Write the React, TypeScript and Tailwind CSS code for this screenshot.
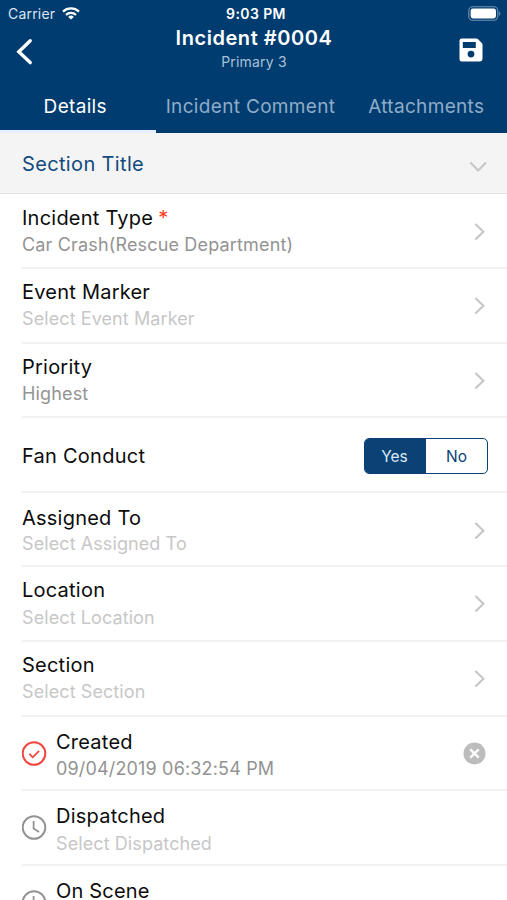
import clsx from 'clsx';

type Field = {
  label: string;
  value: string;
  filled?: boolean;
  required?: boolean;
  low?: boolean;
};

const fields: Field[] = [
  { label: 'Incident Type', value: 'Car Crash(Rescue Department)', filled: true, required: true },
  { label: 'Event Marker', value: 'Select Event Marker' },
  { label: 'Priority', value: 'Highest', filled: true },
];

const placeFields: Field[] = [
  { label: 'Assigned To', value: 'Select Assigned To', low: true },
  { label: 'Location', value: 'Select Location' },
  { label: 'Section', value: 'Select Section' },
];

const times = [
  { label: 'Created', value: '09/04/2019 06:32:54 PM', done: true },
  { label: 'Dispatched', value: 'Select Dispatched', done: false },
];

function Chevron({ className }: { className?: string }) {
  return (
    <svg className={clsx('w-[18px] h-[18px] shrink-0', className)} viewBox="0 0 18 18" fill="none" stroke="#c6c6c6" strokeWidth="2.1">
      <path d="M4.4 1L12.4 8.8l-8 7.8" />
    </svg>
  );
}

function FieldText({ label, value, filled, required, low }: Field) {
  return (
    <div className="flex-1 whitespace-nowrap">
      <p className="text-[20px] leading-6 tracking-[0.23px] text-[#0c0c0c]">
        {label}
        {required && <span className="ml-[5px] text-[#ff3b22]">*</span>}
      </p>
      <p
        className={clsx(
          'text-[18px] leading-6',
          low ? 'mt-[2px]' : 'mt-[3.3px]',
          filled ? 'tracking-[0.16px] text-[#939393]' : 'tracking-[0.09px] text-[#c7c7c7]',
        )}
      >
        {value}
      </p>
    </div>
  );
}

function FieldRow(props: Field) {
  return (
    <div className={clsx('flex h-[74.6px] border-b-2 border-[#f1f1f1] pr-[18px]', props.low ? 'pt-[13px]' : 'pt-[11px]')}>
      <FieldText {...props} />
      <Chevron className={props.low ? 'mt-[16px]' : 'mt-[17px]'} />
    </div>
  );
}

function StatusIcon({ done }: { done: boolean }) {
  return (
    <svg
      className="mt-[11px] mr-[8px] w-[26px] h-[26px] shrink-0"
      viewBox="0 0 26 26"
      fill="none"
      stroke={done ? '#f4453f' : '#949494'}
      strokeWidth="2"
    >
      <circle cx="12" cy="12.5" r="11.3" />
      {done ? <path d="M7.4 12.8l3.3 3.5 6.4-6.5" strokeWidth="1.8" /> : <path d="M11.6 6v7.6l5.4 3.4" strokeWidth="1.8" />}
    </svg>
  );
}

export default function App() {
  return (
    <div className="h-[900px] w-[507px] overflow-hidden bg-white font-['Inter',sans-serif]">
      <header className="h-[132.5px] bg-[#003c70] text-white">
        {/* Status bar */}
        <div className="grid h-[26px] grid-cols-[1fr_auto_1fr] items-center pl-[8px] pr-[6px]">
          <div className="flex items-center gap-[7px] text-[14px] tracking-[0.2px] text-[#dbe6f0]">
            Carrier
            <svg className="h-[13px] w-[18px]" viewBox="0 0 18 13" fill="none" stroke="#fff" strokeWidth="2.2">
              <path d="M1 4.6a11.8 11.8 0 0 1 16 0" />
              <path d="M4 7.9a7.4 7.4 0 0 1 10 0" />
              <path d="M9 12.6L6.2 9.9a4 4 0 0 1 5.6 0z" fill="#fff" stroke="none" />
            </svg>
          </div>
          <div className="mr-[-3px] text-[14px] font-semibold tracking-[0.4px]">9:03 PM</div>
          <svg className="h-[15px] w-[33px] justify-self-end" viewBox="0 0 33 15">
            <rect x="0.8" y="0.8" width="29" height="13.4" rx="4" fill="none" stroke="#6f92b2" strokeWidth="1.1" />
            <rect x="2.6" y="2.6" width="25.4" height="9.8" rx="2.4" fill="#fff" />
            <path d="M31.2 5.2v4.6c1.6-.8 1.6-3.8 0-4.6z" fill="#6f92b2" />
          </svg>
        </div>

        {/* Title bar */}
        <div className="grid h-[53px] grid-cols-[60px_1fr_60px]">
          <svg
            className="ml-[15px] mt-[12px] h-[28px] w-[20px]"
            viewBox="0 0 20 28"
            fill="none"
            stroke="#fff"
            strokeWidth="3.4"
            strokeLinecap="round"
          >
            <path d="M15.2 2.8L3.8 13.8l11.4 10.8" />
          </svg>
          <div className="pl-px text-center">
            <h1 className="text-[20px] leading-6 font-semibold tracking-[0.55px]">Incident #0004</h1>
            <p className="mt-[2px] text-[14px] leading-5 tracking-[0.2px] text-[#a9c2d9]">Primary 3</p>
          </div>
          <svg className="ml-[12px] mt-[12px] h-[24px] w-[24px]" viewBox="0 0 24 24" fill="#fff">
            <path
              fillRule="evenodd"
              d="M2.8.5h14.6a2 2 0 0 1 1.4.6l4 3.9a2 2 0 0 1 .7 1.5v14.6a2.4 2.4 0 0 1-2.4 2.4H2.8a2.3 2.3 0 0 1-2.3-2.3V2.8A2.3 2.3 0 0 1 2.8.5zM3.8 4v6h13V4zM12 12.7a3.4 3.4 0 1 0 0 6.8 3.4 3.4 0 0 0 0-6.8z"
            />
          </svg>
        </div>

        <nav className="grid h-[53.5px] grid-cols-[155.5px_190px_1fr] text-center text-[19px] leading-[45px] tracking-[0.33px] whitespace-nowrap text-[#8facc8]">
          <div className="border-b-[3px] border-[#e8f0ff] pt-[5px] pr-[5px] text-white">Details</div>
          <div className="pt-[5px]">Incident Comment</div>
          <div className="pt-[5px]">Attachments</div>
        </nav>
      </header>

      <div className="flex h-[61px] items-center justify-between border-b border-[#e2e2e2] bg-[#f4f4f4] pr-[20px] pl-[22px]">
        <h2 className="pt-[2px] text-[20px] tracking-[0.35px] text-[#124a7e]">Section Title</h2>
        <Chevron className="mt-[8px] rotate-90" />
      </div>

      <main className="pt-px pl-[22px]">
        {fields.map((f) => (
          <FieldRow key={f.label} {...f} />
        ))}

        <div className="flex h-[74.6px] items-center justify-between border-b-2 border-[#f1f1f1] pt-[2px] pr-[19px]">
          <p className="text-[20px] tracking-[0.25px] text-[#0c0c0c]">Fan Conduct</p>
          <div className="grid h-[36px] w-[124px] grid-cols-2 overflow-hidden rounded-[5px] border-[1.5px] border-[#0a4276] text-center text-[15.5px] leading-[35px]">
            <div className="bg-[#0a4276] pr-[2px] text-[#dce9f5]">Yes</div>
            <div className="text-[#0a4276]">No</div>
          </div>
        </div>

        {placeFields.map((f) => (
          <FieldRow key={f.label} {...f} />
        ))}

        {times.map((t) => (
          <div key={t.label} className="flex h-[74.6px] border-b-2 border-[#f1f1f1] pt-[13px] pr-[21px]">
            <StatusIcon done={t.done} />
            <FieldText label={t.label} value={t.value} filled={t.done} />
            {t.done && (
              <svg className="mt-[12px] h-[23px] w-[23px]" viewBox="0 0 23 23">
                <circle cx="11.5" cy="11.5" r="11" fill="#bcbcbc" />
                <path d="M7.3 7.3l8.4 8.4M15.7 7.3l-8.4 8.4" stroke="#fff" strokeWidth="2.4" />
              </svg>
            )}
          </div>
        ))}

        <div className="flex pt-[13px]">
          <StatusIcon done={false} />
          <p className="text-[20px] leading-6 tracking-[0.2px] text-[#0c0c0c]">On Scene</p>
        </div>
      </main>
    </div>
  );
}
